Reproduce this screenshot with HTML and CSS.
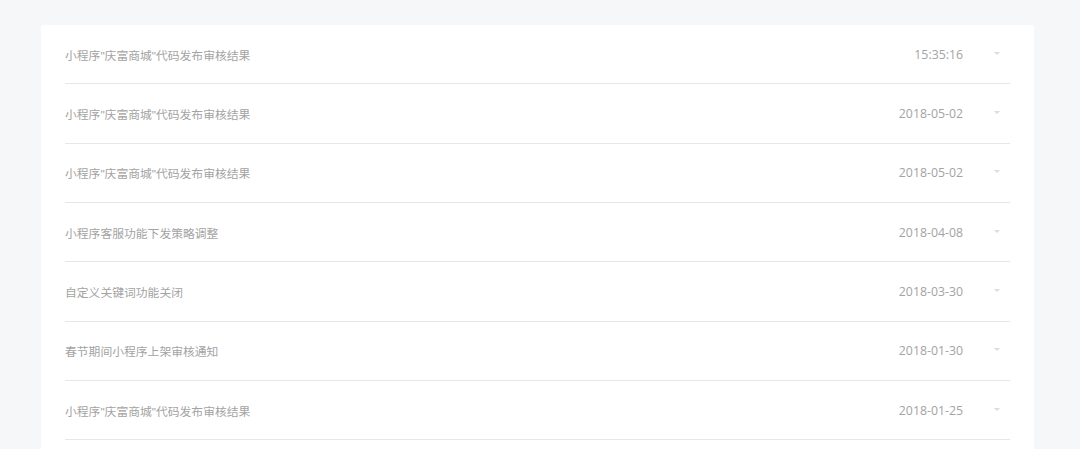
FILE: index.html
```html
<!DOCTYPE html>
<html lang="zh-CN">
<head>
<meta charset="utf-8">
<title>消息</title>
<link rel="stylesheet" href="styles.css">
</head>
<body>
<div class="card">
  <ul class="list">
    <li class="row"><span class="title">小程序"庆富商城"代码发布审核结果</span><span class="date">15:35:16</span><span class="caret"></span></li>
    <li class="row"><span class="title">小程序"庆富商城"代码发布审核结果</span><span class="date">2018-05-02</span><span class="caret"></span></li>
    <li class="row"><span class="title">小程序"庆富商城"代码发布审核结果</span><span class="date">2018-05-02</span><span class="caret"></span></li>
    <li class="row"><span class="title">小程序客服功能下发策略调整</span><span class="date">2018-04-08</span><span class="caret"></span></li>
    <li class="row"><span class="title">自定义关键词功能关闭</span><span class="date">2018-03-30</span><span class="caret"></span></li>
    <li class="row"><span class="title">春节期间小程序上架审核通知</span><span class="date">2018-01-30</span><span class="caret"></span></li>
    <li class="row"><span class="title">小程序"庆富商城"代码发布审核结果</span><span class="date">2018-01-25</span><span class="caret"></span></li>
  </ul>
</div>
</body>
</html>
```

FILE: styles.css
```css
html, body {
  margin: 0;
  padding: 0;
  background: #f6f7f9;
  font-family: "Liberation Sans", "Noto Sans CJK SC", sans-serif;
  overflow: hidden;
}
.card {
  margin: 25px 0 0 41px;
  width: 993px;
  min-height: 430px;
  background: #ffffff;
  border-radius: 3px;
  padding: 0 24px;
  box-sizing: border-box;
}
.list {
  list-style: none;
  margin: 0;
  padding: 0;
}
.row {
  display: flex;
  align-items: center;
  height: 59.33px;
  box-sizing: border-box;
  border-bottom: 1px solid #e7e7eb;
  font-size: 11.8px;
  color: #a3a3a3;
}
.title {
  flex: 1;
  font-family: "Liberation Sans", "Noto Sans CJK SC", sans-serif;
}
.date {
  font-family: "Open Sans", "Noto Sans", sans-serif;
  font-size: 12.3px;
  color: #a3a3a3;
}
.caret {
  width: 0;
  height: 0;
  margin: 0 10px 2px 31px;
  border-left: 3px solid transparent;
  border-right: 3px solid transparent;
  border-top: 3px solid #dcdcdc;
}
```
